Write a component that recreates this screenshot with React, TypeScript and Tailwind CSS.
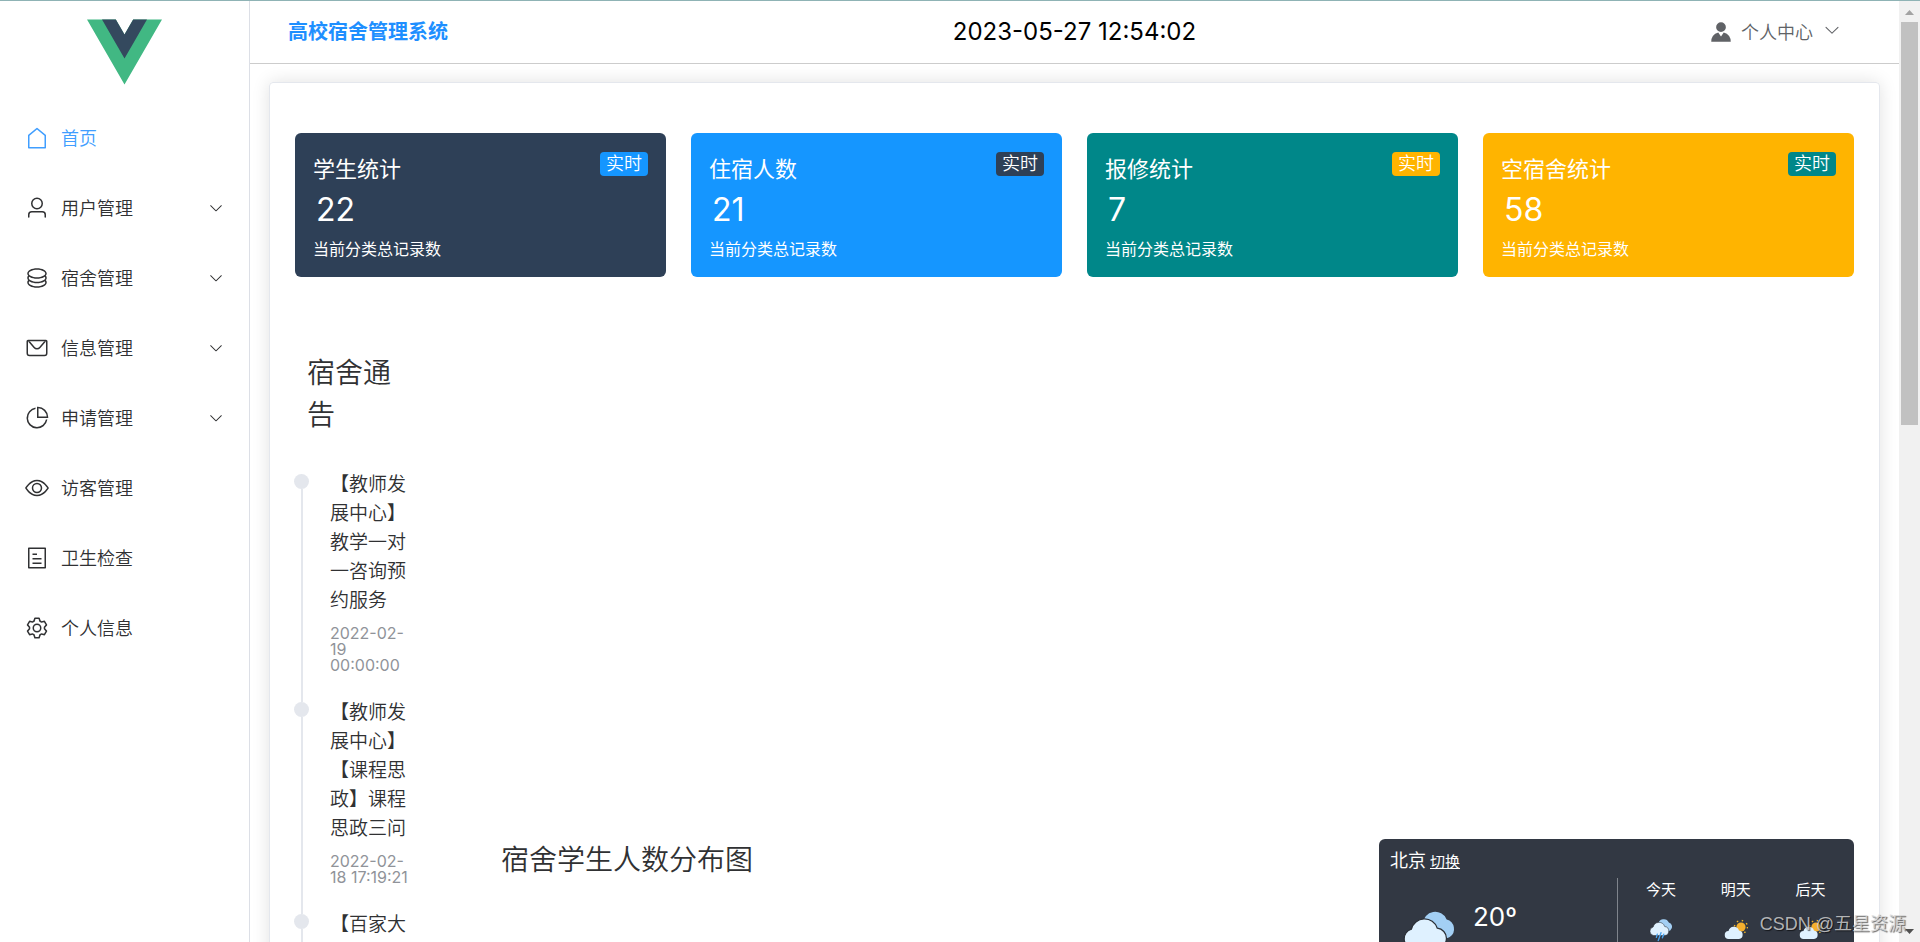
import { useState } from "react"

const icons = {
   house: ["M192 413.952V896h640V413.952L512 147.328 192 413.952zM139.52 374.4l352-293.312a32 32 0 0 1 40.96 0l352 293.312A32 32 0 0 1 896 398.976V928a32 32 0 0 1-32 32H160a32 32 0 0 1-32-32V398.976a32 32 0 0 1 11.52-24.576z"],
   user: ["M512 512a192 192 0 1 0 0-384 192 192 0 0 0 0 384zm0 64a256 256 0 1 1 0-512 256 256 0 0 1 0 512zm320 320v-96a96 96 0 0 0-96-96H288a96 96 0 0 0-96 96v96a32 32 0 1 1-64 0v-96a160 160 0 0 1 160-160h448a160 160 0 0 1 160 160v96a32 32 0 1 1-64 0z"],
   coin: [
      "m161.92 580.736 29.888 58.88C171.328 659.776 160 681.728 160 704c0 82.304 155.328 160 352 160s352-77.696 352-160c0-22.272-11.392-44.16-31.808-64.32l30.464-58.432C903.936 615.808 928 657.664 928 704c0 129.728-188.544 224-416 224S96 833.728 96 704c0-46.592 24.32-88.576 65.92-123.264z",
      "m161.92 388.736 29.888 58.88C171.328 467.84 160 489.792 160 512c0 82.304 155.328 160 352 160s352-77.696 352-160c0-22.272-11.392-44.16-31.808-64.32l30.464-58.432C903.936 423.808 928 465.664 928 512c0 129.728-188.544 224-416 224S96 641.728 96 512c0-46.592 24.32-88.576 65.92-123.264z",
      "M512 544c-227.456 0-416-94.272-416-224S284.544 96 512 96s416 94.272 416 224-188.544 224-416 224zm0-64c196.672 0 352-77.696 352-160S708.672 160 512 160s-352 77.696-352 160 155.328 160 352 160z",
   ],
   message: [
      "M128 224v512a64 64 0 0 0 64 64h640a64 64 0 0 0 64-64V224H128zm0-64h768a64 64 0 0 1 64 64v512a128 128 0 0 1-128 128H192A128 128 0 0 1 64 736V224a64 64 0 0 1 64-64z",
      "M904 224 656.512 506.88a192 192 0 0 1-289.024 0L120 224h784zm-698.944 0 210.56 240.704a128 128 0 0 0 192.704 0L818.944 224H205.056z",
   ],
   pie: [
      "M448 68.48v64.832A384.128 384.128 0 0 0 512 896a384.128 384.128 0 0 0 378.688-320h64.768A448.128 448.128 0 0 1 64 512 448.128 448.128 0 0 1 448 68.48z",
      "M576 97.28V448h350.72A384.064 384.064 0 0 0 576 97.28zM512 64V33.152A448 448 0 0 1 990.848 512H512V64z",
   ],
   view: ["M512 160c320 0 512 352 512 352S832 864 512 864 0 512 0 512s192-352 512-352zm0 64c-225.28 0-384.128 208.064-436.8 288 52.608 79.872 211.456 288 436.8 288 225.28 0 384.128-208.064 436.8-288-52.608-79.872-211.456-288-436.8-288zm0 64a224 224 0 1 1 0 448 224 224 0 0 1 0-448zm0 64a160.192 160.192 0 0 0-160 160c0 88.192 71.744 160 160 160s160-71.808 160-160-71.744-160-160-160z"],
   tickets: ["M192 128v768h640V128H192zm-32-64h704a32 32 0 0 1 32 32v832a32 32 0 0 1-32 32H160a32 32 0 0 1-32-32V96a32 32 0 0 1 32-32zm160 448h384v64H320v-64zm0-192h192v64H320v-64zm0 384h384v64H320v-64z"],
   setting: ["M600.704 64a32 32 0 0 1 30.464 22.208l35.2 109.376c14.784 7.232 28.928 15.36 42.432 24.512l112.384-24.192a32 32 0 0 1 34.432 15.36L944.32 364.8a32 32 0 0 1-4.032 37.504l-77.12 85.12a357.12 357.12 0 0 1 0 49.024l77.12 85.248a32 32 0 0 1 4.032 37.504l-88.704 153.6a32 32 0 0 1-34.432 15.296L708.8 803.904c-13.44 9.088-27.648 17.28-42.368 24.512l-35.264 109.376A32 32 0 0 1 600.704 960H423.296a32 32 0 0 1-30.464-22.208L357.696 828.48a351.616 351.616 0 0 1-42.56-24.64l-112.32 24.256a32 32 0 0 1-34.432-15.36L79.68 659.2a32 32 0 0 1 4.032-37.504l77.12-85.248a357.12 357.12 0 0 1 0-48.896l-77.12-85.248A32 32 0 0 1 79.68 364.8l88.704-153.6a32 32 0 0 1 34.432-15.296l112.32 24.256c13.568-9.152 27.776-17.408 42.56-24.64l35.2-109.312A32 32 0 0 1 423.232 64H600.64zm-23.424 64H446.72l-36.352 113.088-24.512 11.968a294.113 294.113 0 0 0-34.816 20.096l-22.656 15.36-116.224-25.088-65.28 113.152 79.68 88.192-1.92 27.136a293.12 293.12 0 0 0 0 40.192l1.92 27.136-79.808 88.192 65.344 113.152 116.224-25.024 22.656 15.296a294.113 294.113 0 0 0 34.816 20.096l24.512 11.968L446.72 896h130.688l36.48-113.152 24.448-11.904a288.282 288.282 0 0 0 34.752-20.096l22.592-15.296 116.288 25.024 65.28-113.152-79.744-88.192 1.92-27.136a293.12 293.12 0 0 0 0-40.256l-1.92-27.136 79.808-88.128-65.344-113.152-116.288 24.96-22.592-15.232a287.616 287.616 0 0 0-34.752-20.096l-24.448-11.904L577.344 128zM512 320a192 192 0 1 1 0 384 192 192 0 0 1 0-384zm0 64a128 128 0 1 0 0 256 128 128 0 0 0 0-256z"],
   arrow: ["M831.872 340.864 512 652.672 192.128 340.864a30.592 30.592 0 0 0-42.752 0 29.12 29.12 0 0 0 0 41.6L489.664 714.24a32 32 0 0 0 44.672 0l340.288-331.712a29.12 29.12 0 0 0 0-41.728 30.592 30.592 0 0 0-42.752 0z"],
   avatar: ["M628.736 528.896A416 416 0 0 1 928 928H96a415.872 415.872 0 0 1 299.264-399.104L512 704l116.736-175.104zM720 304a208 208 0 1 1-416 0 208 208 0 0 1 416 0z"],
}

type IconName = keyof typeof icons

const Icon = ({ name, className }: { name: IconName, className: string }) => (
   <svg viewBox="0 0 1024 1024" fill="currentColor" className={className} aria-hidden="true">
      {icons[name].map(d => <path key={d} d={d} />)}
   </svg>
)

const menu: { label: string, icon: IconName, children?: boolean }[] = [
   { label: "首页", icon: "house" },
   { label: "用户管理", icon: "user", children: true },
   { label: "宿舍管理", icon: "coin", children: true },
   { label: "信息管理", icon: "message", children: true },
   { label: "申请管理", icon: "pie", children: true },
   { label: "访客管理", icon: "view" },
   { label: "卫生检查", icon: "tickets" },
   { label: "个人信息", icon: "setting" },
]

const stats = [
   { title: "学生统计", value: 22, card: "bg-[#2e4057]", badge: "bg-[#1596ff]" },
   { title: "住宿人数", value: 21, card: "bg-[#1596ff]", badge: "bg-[#2e4057]" },
   { title: "报修统计", value: 7, card: "bg-[#008789]", badge: "bg-[#ffb400]" },
   { title: "空宿舍统计", value: 58, card: "bg-[#ffb400]", badge: "bg-[#008789]" },
]

const notices = [
   { text: "【教师发展中心】教学一对一咨询预约服务", time: "2022-02-\n19\n00:00:00" },
   { text: "【教师发展中心】【课程思政】课程思政三问", time: "2022-02-\n18 17:19:21" },
   { text: "【百家大", time: "" },
]

const days = [
   { label: "今天", rain: true },
   { label: "明天", rain: false },
   { label: "后天", rain: false },
]

const Sidebar = () => {
   const [active, setActive] = useState("首页")

   return (
      <aside className="w-[250px] shrink-0 border-r border-[#dcdfe6]">
         <div className="h-[102px] pt-[18px] flex justify-center">
            <svg viewBox="0 0 261.76 226.69" className="w-[75px] h-[66px]" aria-label="logo">
               <path d="M161.096.001l-30.225 52.351L100.647.001H-.005l130.877 226.688L261.749.001z" fill="#41b883" />
               <path d="M161.096.001l-30.225 52.351L100.647.001H52.346l78.526 136.01L209.398.001z" fill="#34495e" />
            </svg>
         </div>
         <nav>
            {menu.map(item => (
               <button
                  key={item.label}
                  onClick={() => setActive(item.label)}
                  className={`w-full h-[70px] px-[25px] flex items-center text-[18px] font-[350] ${active === item.label ? "text-[#409eff]" : "text-[#303133]"}`}
               >
                  <Icon name={item.icon} className="w-6 h-6 mr-3" />
                  <span>{item.label}</span>
                  {item.children && <Icon name="arrow" className="w-4 h-4 ml-auto" />}
               </button>
            ))}
         </nav>
      </aside>
   )
}

const Header = () => (
   <header className="h-[63px] shrink-0 px-[38px] grid grid-cols-3 items-center border-b border-[#cccccc]">
      <h1 className="text-xl font-bold text-[#1e8fff]">高校宿舍管理系统</h1>
      <time className="text-center text-2xl text-black">2023-05-27 12:54:02</time>
      <button className="justify-self-end pr-5 flex items-center text-[18px] font-[350] text-[#606266]">
         <Icon name="avatar" className="w-6 h-6 mr-2" />
         个人中心
         <Icon name="arrow" className="w-[18px] h-[18px] ml-2.5 mb-1" />
      </button>
   </header>
)

const Stats = () => (
   <section className="grid grid-cols-4 gap-[25px]">
      {stats.map(s => (
         <article key={s.title} className={`h-36 px-[18px] pt-[19px] flex flex-col rounded-md text-white ${s.card}`}>
            <div className="flex items-start justify-between">
               <h2 className="mt-[2px] text-[22px] leading-[30px]">{s.title}</h2>
               <span className={`w-12 h-6 text-center text-[18px] leading-6 font-[350] rounded ${s.badge}`}>实时</span>
            </div>
            <p className="pl-[3px] mt-1.5 text-[32px] leading-10">{s.value}</p>
            <p className="mt-[7px] text-base leading-6">当前分类总记录数</p>
         </article>
      ))}
   </section>
)

const Notices = () => (
   <section className="w-[110px] shrink-0">
      <h2 className="pl-3 text-[28px] leading-[42px] font-[350] text-[#303133]">宿舍通告</h2>
      <ul className="mt-[34px] -ml-px">
         {notices.map(n => (
            <li key={n.text} className="group flex">
               <div className="w-[15px] mr-[21px] flex flex-col items-center">
                  <span className="w-0.5 h-1 bg-[#e4e7ed] group-first:invisible"></span>
                  <span className="w-[15px] h-[15px] shrink-0 rounded-full bg-[#e4e7ed]"></span>
                  <span className="w-0.5 grow bg-[#e4e7ed]"></span>
               </div>
               <div className="w-20 shrink-0 pb-[25px]">
                  <p className="text-[19px] leading-[29px] font-[350] text-[#303133]">{n.text}</p>
                  {n.time && <time className="mt-[10px] block whitespace-pre-line text-base leading-4 text-[#909399]">{n.time}</time>}
               </div>
            </li>
         ))}
      </ul>
   </section>
)

const Clouds = ({ rain, className }: { rain?: boolean, className: string }) => (
   <svg viewBox="0 0 52 50" className={className} aria-hidden="true">
      <path d="M20 13a12 12 0 0 1 23-4a9.500 9.500 0 0 1 3 17c-4 2-10 2-16 0z" fill="#a3cff4" />
      <path
         d="M10 37a9.500 9.500 0 0 1-1-18.500a13 13 0 0 1 25-1a9.800 9.800 0 0 1 0 19.500z"
         fill="#dff1ff"
         stroke="#2b2f36"
         strokeWidth="1.200"
      />
      {rain && (
         <g stroke="#4aa3ee" strokeWidth="3" strokeLinecap="round">
            <path d="M18 34l-2 7" />
            <path d="M26 31l-6 17" />
            <path d="M32 34l-3 8" />
         </g>
      )}
   </svg>
)

const SunCloud = ({ className }: { className: string }) => (
   <svg viewBox="0 0 24 24" className={className} aria-hidden="true">
      <circle cx="17" cy="9" r="6.500" fill="none" stroke="#f0b429" strokeWidth="1.500" strokeDasharray="1.500 3.600" />
      <circle cx="17" cy="9" r="4.600" fill="#f5b02e" />
      <path d="M5 21a4 4 0 0 1-.5-8a5.500 5.500 0 0 1 10.500-.5a4.300 4.300 0 0 1 0 8.500z" fill="#dff1ff" />
   </svg>
)

const Weather = () => (
   <section className="w-[475px] h-[200px] shrink-0 flex flex-col rounded-md bg-[#323843] text-white">
      <div className="h-[39px] px-[11px] pt-[10px] flex items-baseline gap-1 text-[18px] leading-6">
         <span>北京</span>
         <a href="#" className="text-[15px] underline underline-offset-1">切换</a>
      </div>
      <div className="grow flex">
         <div className="w-1/2 pl-[23px] flex items-start">
            <Clouds className="w-[54px] h-[52px] mt-8" />
            <span className="mt-6 ml-[17px] text-[26px] leading-[30px]">20º</span>
         </div>
         <ul className="w-1/2 px-[6px] grid grid-cols-3 border-l border-[#7f848c]">
            {days.map(d => (
               <li key={d.label} className="flex flex-col items-center text-[15px] leading-6">
                  {d.label}
                  {d.rain ? <Clouds rain className="w-6 h-6 mt-4" /> : <SunCloud className="w-6 h-6 mt-4" />}
               </li>
            ))}
         </ul>
      </div>
   </section>
)

const Scrollbar = () => (
   <div className="w-[21px] shrink-0 flex flex-col items-center bg-[#f1f1f1]" aria-hidden="true">
      <svg viewBox="0 0 21 21" className="w-[21px] h-[21px] shrink-0">
         <path d="M6 14l4.500-5l4.500 5z" fill="#a3a3a3" />
      </svg>
      <div className="w-[17px] h-3/7 bg-[#c1c1c1]"></div>
      <svg viewBox="0 0 21 21" className="w-[21px] h-[21px] shrink-0 mt-auto">
         <path d="M6 8l4.500 5l4.500-5z" fill="#505050" />
      </svg>
   </div>
)

const App = () => (
   <div className="relative h-screen flex overflow-hidden border-t border-[#8fb3b5] bg-white font-[Inter,'Noto_Sans_CJK_SC',sans-serif]">
      <Sidebar />
      <div className="grow min-w-0 flex flex-col">
         <Header />
         <main className="grow min-h-0 overflow-hidden px-[19px] pt-[18px]">
            <div className="px-[25px] pt-[50px] pb-6 rounded border border-[#e4e7ed] shadow-[0_0_18px_rgba(0,0,0,0.12)]">
               <Stats />
               <div className="mt-[75px] flex items-start">
                  <Notices />
                  <div className="grow mt-[487px] pl-24 flex items-start justify-between">
                     <h2 className="text-[28px] leading-[42px] font-[350] text-[#303133]">宿舍学生人数分布图</h2>
                     <Weather />
                  </div>
               </div>
            </div>
         </main>
      </div>
      <Scrollbar />
      <span className="absolute right-[14px] bottom-[6px] font-['Liberation_Sans','Noto_Sans_CJK_SC',sans-serif] text-[18px] leading-6 text-[#d8d8d8]/80 [text-shadow:1px_1px_1px_rgba(0,0,0,0.6)]">CSDN @五星资源</span>
   </div>
)

export default App
